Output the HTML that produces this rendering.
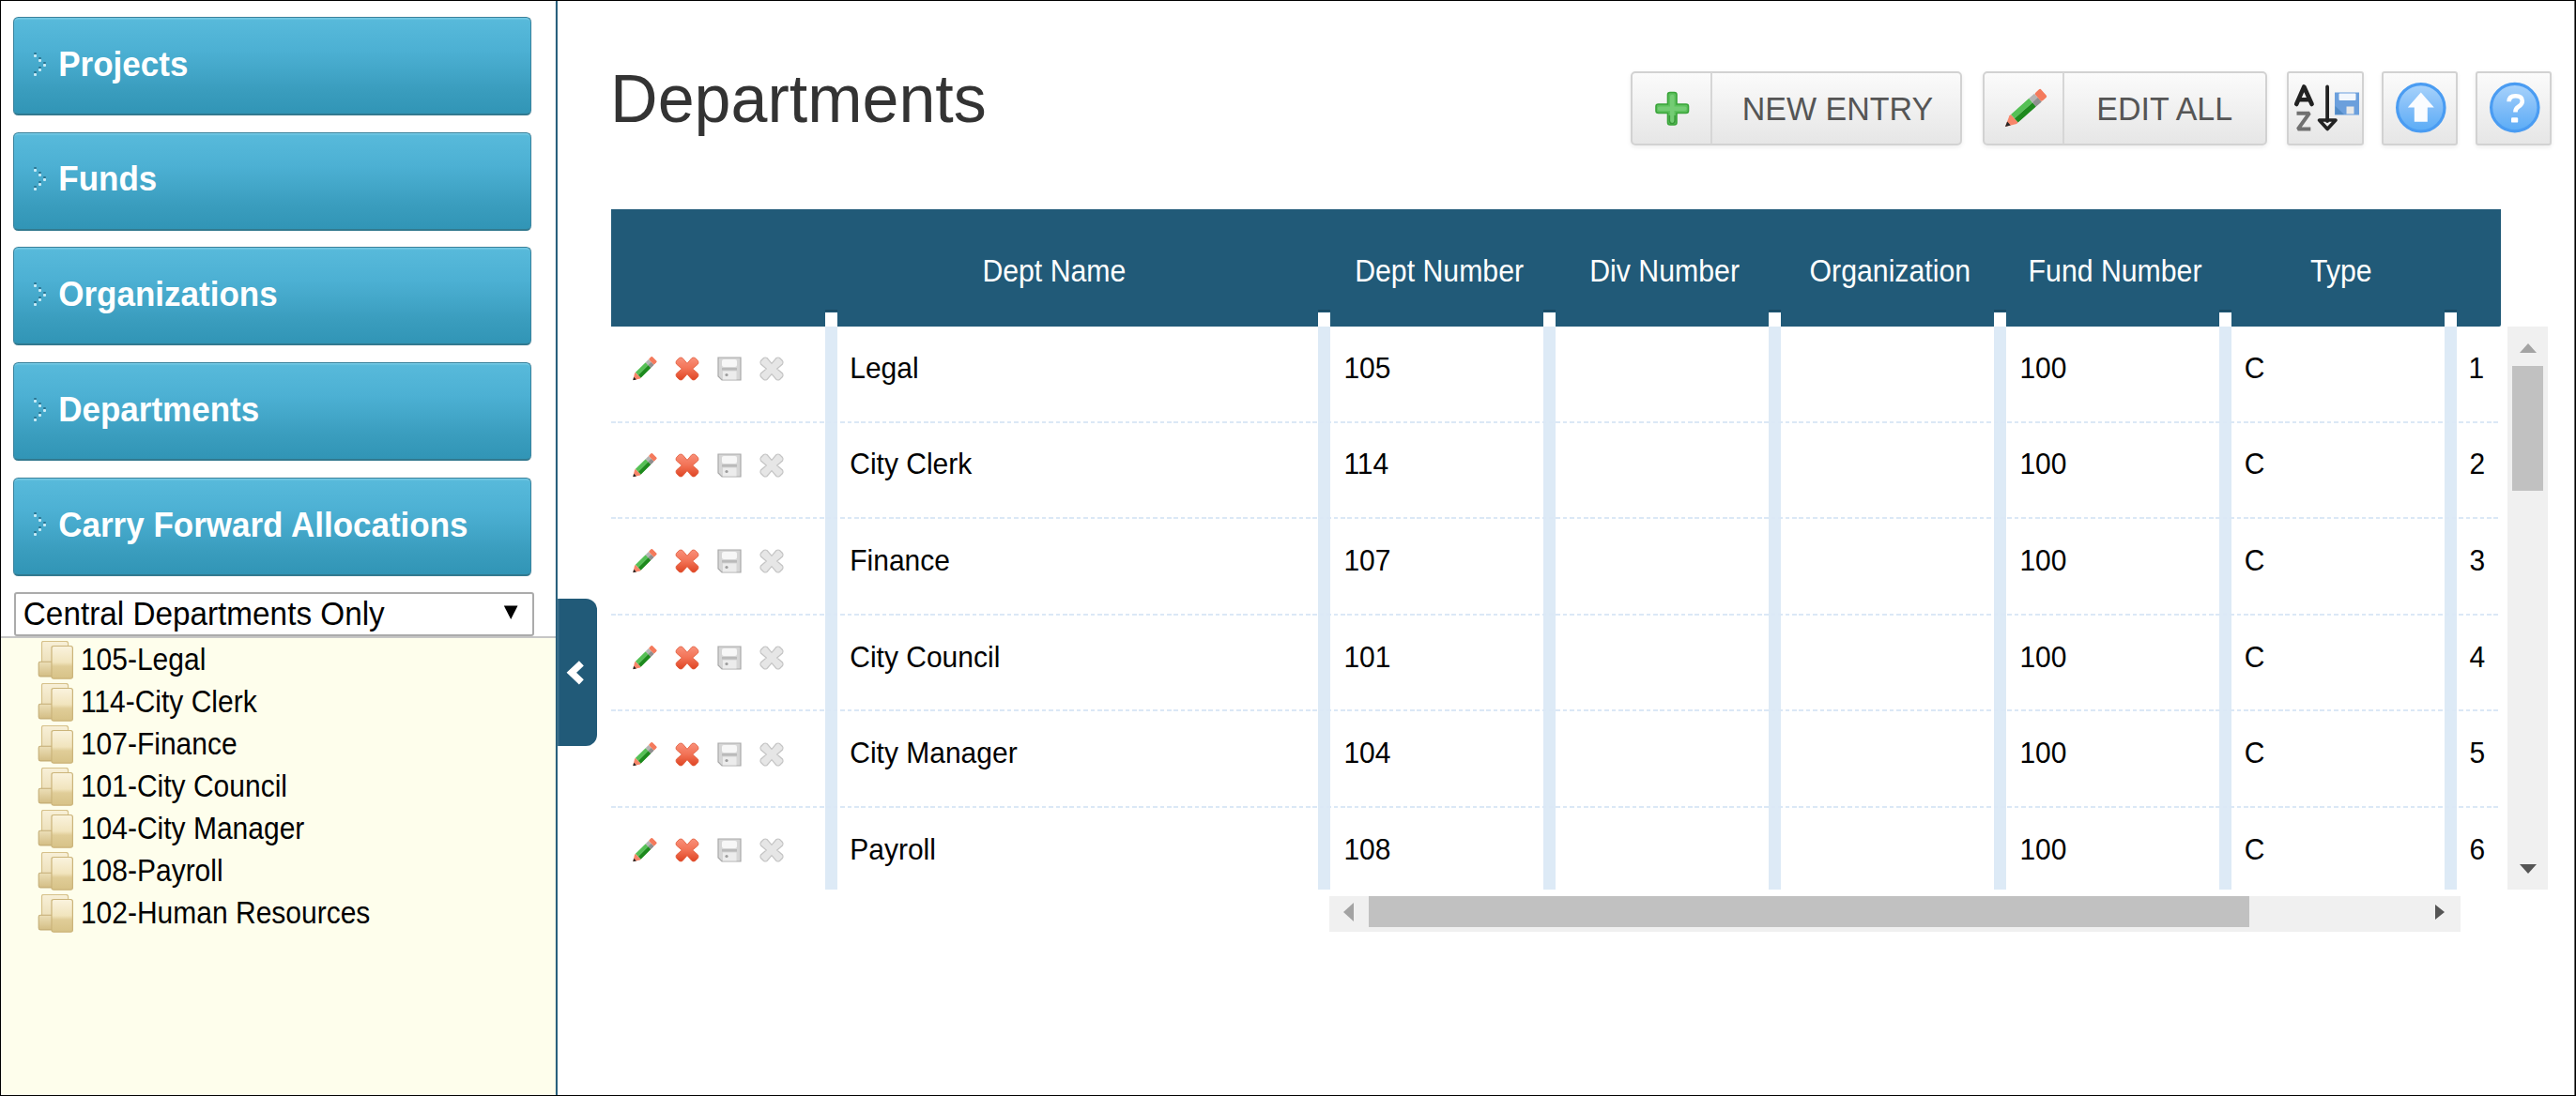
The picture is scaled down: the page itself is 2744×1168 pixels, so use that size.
<!DOCTYPE html>
<html><head><meta charset="utf-8">
<style>
*{box-sizing:border-box;margin:0;padding:0}
html,body{width:2744px;height:1168px;overflow:hidden;background:#fff}
body{position:relative;font-family:"Liberation Sans",sans-serif}
.a{position:absolute}
.t{font-family:"Liberation Sans",sans-serif;white-space:nowrap}
.frame{left:0;top:0;width:2744px;height:1168px;border:1px solid #000;border-right:1px solid #000;box-shadow:inset -1px 0 0 #666;z-index:50}
.nav{left:13.8px;width:552.6px;height:105px;border-radius:5.5px;
  background:linear-gradient(#58badb 0%,#4cb0d3 35%,#3a9dbe 75%,#3195b6 100%);
  border:1.5px solid #3a839d;border-bottom:2px solid #32798f;box-shadow:inset 0 2.5px 1px -1px #76cae5,0 0 1px rgba(0,0,0,.25)}
.sel{left:14.6px;top:630.6px;width:554px;height:47.6px;border:2px solid #ababab;background:#fff;border-radius:3px}
.tree{left:1px;top:678px;width:591px;height:489px;background:#fefeec;border-top:2px solid #c6c6c6}
.divider{left:591px;top:1px;width:2.4px;height:1166px;background:#215a78;transform:translateX(0.9px)}
.tab{left:594px;top:638px;width:42.3px;height:157px;background:#215a78;border-radius:0 12px 12px 0;box-shadow:inset 1.5px 0 0 #3b6f8b}
.btn{top:75.7px;height:79.6px;border:2px solid #d2d2d2;border-radius:5px;background:linear-gradient(#fbfbfb,#e6e6e6);box-shadow:0 2px 5px rgba(0,0,0,.07)}
.sep{top:77px;width:2px;height:77px;background:#d6d6d6}
.hdr{left:651px;top:223px;width:2013px;height:125px;background:#215a78;border-radius:0 0 2px 0}
.hw{top:333px;width:13px;height:15px;background:#fff}
.hd{top:330px;width:13px;height:2px;background:#1a4a63}
.hb{top:348px;width:13px;height:600px;background:#ddeaf6}
.dash{left:651px;width:2013px;height:2px;background:repeating-linear-gradient(90deg,#dbe8f6 0 4.5px,transparent 4.5px 7.4px)}
</style></head><body>
<div style="position:absolute;left:0;top:0;width:2744px;height:1168px;">

<svg width="0" height="0" style="position:absolute">
<defs>
 <linearGradient id="gRed" x1="0" y1="0" x2="0" y2="1"><stop offset="0" stop-color="#f9907a"/><stop offset="0.5" stop-color="#f27255"/><stop offset="1" stop-color="#df4524"/></linearGradient>
 <linearGradient id="gGreen" x1="0" y1="0" x2="0" y2="1"><stop offset="0" stop-color="#78d078"/><stop offset="1" stop-color="#3aa63a"/></linearGradient>
 <linearGradient id="gBlue" x1="0" y1="0" x2="0" y2="1"><stop offset="0" stop-color="#a9d3fb"/><stop offset="0.55" stop-color="#7dbbf8"/><stop offset="1" stop-color="#5aacf6"/></linearGradient>
 <linearGradient id="gFoldB" x1="0" y1="0" x2="0" y2="1"><stop offset="0" stop-color="#f8f0d8"/><stop offset="1" stop-color="#e6d6a8"/></linearGradient>
 <linearGradient id="gFoldT" x1="0" y1="0" x2="0" y2="1"><stop offset="0" stop-color="#ecdfb8"/><stop offset="1" stop-color="#d3bd84"/></linearGradient>
 <linearGradient id="gFoldF" x1="0" y1="0" x2="0" y2="1"><stop offset="0" stop-color="#faf3de"/><stop offset="0.5" stop-color="#f1e4bd"/><stop offset="0.62" stop-color="#e0cd98"/><stop offset="1" stop-color="#d7c287"/></linearGradient>
 <symbol id="pencil" viewBox="0 0 40 12">
   <path d="M0 6 L8 0.5 L9.5 0.5 L9.5 11.5 L8 11.5 Z" fill="#f7866a"/>
   <path d="M0 6 L3.8 3.4 L3.8 8.6 Z" fill="#262626"/>
   <rect x="9.5" y="0.5" width="18.5" height="5.5" fill="#55c055"/>
   <rect x="9.5" y="6" width="18.5" height="5.5" fill="#1d8a1d"/>
   <rect x="28" y="0.5" width="5.5" height="11" fill="#b4b4b4"/>
   <rect x="28" y="6" width="5.5" height="5.5" fill="#8f8f8f"/>
   <rect x="33.5" y="0.5" width="6" height="11" rx="1.5" fill="#f47a5c"/>
 </symbol>
 <symbol id="xshape" viewBox="0 0 26 26">
   <path d="M4.5 1.5 Q6 0.5 8 1.5 L13 7.3 L18 1.5 Q20 0.5 21.5 1.5 L24.5 4.5 Q25.5 6 24.5 8 L18.7 13 L24.5 18 Q25.5 20 24.5 21.5 L21.5 24.5 Q20 25.5 18 24.5 L13 18.7 L8 24.5 Q6 25.5 4.5 24.5 L1.5 21.5 Q0.5 20 1.5 18 L7.3 13 L1.5 8 Q0.5 6 1.5 4.5 Z"/>
 </symbol>
 <symbol id="floppy" viewBox="0 0 26 26">
   <path d="M1 1 H25 V25 H5 L1 21 Z" fill="#d6d6d6" stroke="#a9a9a9" stroke-width="1.2"/>
   <rect x="5" y="3" width="16" height="8" rx="2" fill="#f7f7f7"/>
   <rect x="5" y="12" width="16" height="2.6" fill="#bababa"/>
   <rect x="6" y="15.5" width="14.5" height="9" fill="#ececec"/>
   <circle cx="10" cy="19.5" r="1.6" fill="#9c9c9c"/>
 </symbol>
 <symbol id="folder" viewBox="0 0 40 42">
   <path d="M6.5 2.3 Q6.5 0.4 8.6 0.4 H32.2 Q34.6 0.4 34.6 2.6 V37.4 H6.5 Z" fill="url(#gFoldB)" stroke="#d6c18a" stroke-width="1.2"/>
   <path d="M3.2 24 Q3.2 22.3 5 22.3 H20.8 V37.9 H5 Q3.2 37.9 3.2 36 Z" fill="url(#gFoldT)" stroke="#c4ad76" stroke-width="1.1"/>
   <path d="M17 7.6 Q17 5.5 19.2 5.5 H37.2 Q39.4 5.5 39.4 7.8 V38 Q39.4 40.2 37.2 40.2 H19.2 Q17 40.2 17 38 Z" fill="url(#gFoldF)" stroke="#cbb47a" stroke-width="1.2"/>
 </symbol>
</defs></svg>

<div class="a nav" style="top:17.8px"></div>
<div class="a nav" style="top:140.5px"></div>
<div class="a nav" style="top:263.2px"></div>
<div class="a nav" style="top:385.9px"></div>
<div class="a nav" style="top:508.6px"></div>
<div class="a t" style="left:62.25px;top:50.75px;font-size:35px;line-height:35px;font-weight:700;color:#fff;transform:scaleY(1.03);transform-origin:0 29.75px;">Projects</div>
<div class="a" style="left:36.4px;top:55.5px;width:3px;height:2px;background:#2b7490;border-radius:1px"></div>
<div class="a" style="left:36.4px;top:57.5px;width:3px;height:3px;background:#c9ebf6;border-radius:1px"></div>
<div class="a" style="left:41.0px;top:60.5px;width:3px;height:2px;background:#2b7490;border-radius:1px"></div>
<div class="a" style="left:41.0px;top:62.5px;width:3px;height:3px;background:#c9ebf6;border-radius:1px"></div>
<div class="a" style="left:46.1px;top:65.5px;width:3px;height:2px;background:#2b7490;border-radius:1px"></div>
<div class="a" style="left:46.1px;top:67.5px;width:3px;height:3px;background:#c9ebf6;border-radius:1px"></div>
<div class="a" style="left:41.0px;top:70.5px;width:3px;height:2px;background:#2b7490;border-radius:1px"></div>
<div class="a" style="left:41.0px;top:72.5px;width:3px;height:3px;background:#c9ebf6;border-radius:1px"></div>
<div class="a" style="left:36.4px;top:75.5px;width:3px;height:2px;background:#2b7490;border-radius:1px"></div>
<div class="a" style="left:36.4px;top:77.5px;width:3px;height:3px;background:#c9ebf6;border-radius:1px"></div>
<div class="a t" style="left:62.25px;top:173.45px;font-size:35px;line-height:35px;font-weight:700;color:#fff;transform:scaleY(1.03);transform-origin:0 29.75px;">Funds</div>
<div class="a" style="left:36.4px;top:178.2px;width:3px;height:2px;background:#2b7490;border-radius:1px"></div>
<div class="a" style="left:36.4px;top:180.2px;width:3px;height:3px;background:#c9ebf6;border-radius:1px"></div>
<div class="a" style="left:41.0px;top:183.2px;width:3px;height:2px;background:#2b7490;border-radius:1px"></div>
<div class="a" style="left:41.0px;top:185.2px;width:3px;height:3px;background:#c9ebf6;border-radius:1px"></div>
<div class="a" style="left:46.1px;top:188.2px;width:3px;height:2px;background:#2b7490;border-radius:1px"></div>
<div class="a" style="left:46.1px;top:190.2px;width:3px;height:3px;background:#c9ebf6;border-radius:1px"></div>
<div class="a" style="left:41.0px;top:193.2px;width:3px;height:2px;background:#2b7490;border-radius:1px"></div>
<div class="a" style="left:41.0px;top:195.2px;width:3px;height:3px;background:#c9ebf6;border-radius:1px"></div>
<div class="a" style="left:36.4px;top:198.2px;width:3px;height:2px;background:#2b7490;border-radius:1px"></div>
<div class="a" style="left:36.4px;top:200.2px;width:3px;height:3px;background:#c9ebf6;border-radius:1px"></div>
<div class="a t" style="left:62.25px;top:296.15px;font-size:35px;line-height:35px;font-weight:700;color:#fff;transform:scaleY(1.03);transform-origin:0 29.75px;">Organizations</div>
<div class="a" style="left:36.4px;top:300.9px;width:3px;height:2px;background:#2b7490;border-radius:1px"></div>
<div class="a" style="left:36.4px;top:302.9px;width:3px;height:3px;background:#c9ebf6;border-radius:1px"></div>
<div class="a" style="left:41.0px;top:305.9px;width:3px;height:2px;background:#2b7490;border-radius:1px"></div>
<div class="a" style="left:41.0px;top:307.9px;width:3px;height:3px;background:#c9ebf6;border-radius:1px"></div>
<div class="a" style="left:46.1px;top:310.9px;width:3px;height:2px;background:#2b7490;border-radius:1px"></div>
<div class="a" style="left:46.1px;top:312.9px;width:3px;height:3px;background:#c9ebf6;border-radius:1px"></div>
<div class="a" style="left:41.0px;top:315.9px;width:3px;height:2px;background:#2b7490;border-radius:1px"></div>
<div class="a" style="left:41.0px;top:317.9px;width:3px;height:3px;background:#c9ebf6;border-radius:1px"></div>
<div class="a" style="left:36.4px;top:320.9px;width:3px;height:2px;background:#2b7490;border-radius:1px"></div>
<div class="a" style="left:36.4px;top:322.9px;width:3px;height:3px;background:#c9ebf6;border-radius:1px"></div>
<div class="a t" style="left:62.25px;top:418.85px;font-size:35px;line-height:35px;font-weight:700;color:#fff;transform:scaleY(1.03);transform-origin:0 29.75px;">Departments</div>
<div class="a" style="left:36.4px;top:423.6px;width:3px;height:2px;background:#2b7490;border-radius:1px"></div>
<div class="a" style="left:36.4px;top:425.6px;width:3px;height:3px;background:#c9ebf6;border-radius:1px"></div>
<div class="a" style="left:41.0px;top:428.6px;width:3px;height:2px;background:#2b7490;border-radius:1px"></div>
<div class="a" style="left:41.0px;top:430.6px;width:3px;height:3px;background:#c9ebf6;border-radius:1px"></div>
<div class="a" style="left:46.1px;top:433.6px;width:3px;height:2px;background:#2b7490;border-radius:1px"></div>
<div class="a" style="left:46.1px;top:435.6px;width:3px;height:3px;background:#c9ebf6;border-radius:1px"></div>
<div class="a" style="left:41.0px;top:438.6px;width:3px;height:2px;background:#2b7490;border-radius:1px"></div>
<div class="a" style="left:41.0px;top:440.6px;width:3px;height:3px;background:#c9ebf6;border-radius:1px"></div>
<div class="a" style="left:36.4px;top:443.6px;width:3px;height:2px;background:#2b7490;border-radius:1px"></div>
<div class="a" style="left:36.4px;top:445.6px;width:3px;height:3px;background:#c9ebf6;border-radius:1px"></div>
<div class="a t" style="left:62.25px;top:541.55px;font-size:35px;line-height:35px;font-weight:700;color:#fff;transform:scaleY(1.03);transform-origin:0 29.75px;">Carry Forward Allocations</div>
<div class="a" style="left:36.4px;top:546.3px;width:3px;height:2px;background:#2b7490;border-radius:1px"></div>
<div class="a" style="left:36.4px;top:548.3px;width:3px;height:3px;background:#c9ebf6;border-radius:1px"></div>
<div class="a" style="left:41.0px;top:551.3px;width:3px;height:2px;background:#2b7490;border-radius:1px"></div>
<div class="a" style="left:41.0px;top:553.3px;width:3px;height:3px;background:#c9ebf6;border-radius:1px"></div>
<div class="a" style="left:46.1px;top:556.3px;width:3px;height:2px;background:#2b7490;border-radius:1px"></div>
<div class="a" style="left:46.1px;top:558.3px;width:3px;height:3px;background:#c9ebf6;border-radius:1px"></div>
<div class="a" style="left:41.0px;top:561.3px;width:3px;height:2px;background:#2b7490;border-radius:1px"></div>
<div class="a" style="left:41.0px;top:563.3px;width:3px;height:3px;background:#c9ebf6;border-radius:1px"></div>
<div class="a" style="left:36.4px;top:566.3px;width:3px;height:2px;background:#2b7490;border-radius:1px"></div>
<div class="a" style="left:36.4px;top:568.3px;width:3px;height:3px;background:#c9ebf6;border-radius:1px"></div>
<div class="a sel"></div>
<div class="a t" style="left:24.84px;top:638.00px;font-size:33.3px;line-height:33.3px;font-weight:400;color:#000;transform:scaleY(1.03);transform-origin:0 28.30px;">Central Departments Only</div>
<svg class="a" style="left:530px;top:640px" width="28" height="26" viewBox="0 0 28 26"><path d="M6.8 5.5H21.5L14.2 20Z" fill="#000"/></svg>
<div class="a tree"></div>
<div class="a t" style="left:85.90px;top:688.80px;font-size:30px;line-height:30px;font-weight:400;color:#000;transform:scaleY(1.08);transform-origin:0 25.50px;">105-Legal</div>
<svg class="a" style="left:38px;top:683.0px" width="40" height="42"><use href="#folder"/></svg>
<div class="a t" style="left:85.90px;top:733.75px;font-size:30px;line-height:30px;font-weight:400;color:#000;transform:scaleY(1.08);transform-origin:0 25.50px;">114-City Clerk</div>
<svg class="a" style="left:38px;top:728.0px" width="40" height="42"><use href="#folder"/></svg>
<div class="a t" style="left:85.90px;top:778.70px;font-size:30px;line-height:30px;font-weight:400;color:#000;transform:scaleY(1.08);transform-origin:0 25.50px;">107-Finance</div>
<svg class="a" style="left:38px;top:772.9px" width="40" height="42"><use href="#folder"/></svg>
<div class="a t" style="left:85.90px;top:823.65px;font-size:30px;line-height:30px;font-weight:400;color:#000;transform:scaleY(1.08);transform-origin:0 25.50px;">101-City Council</div>
<svg class="a" style="left:38px;top:817.9px" width="40" height="42"><use href="#folder"/></svg>
<div class="a t" style="left:85.90px;top:868.60px;font-size:30px;line-height:30px;font-weight:400;color:#000;transform:scaleY(1.08);transform-origin:0 25.50px;">104-City Manager</div>
<svg class="a" style="left:38px;top:862.8px" width="40" height="42"><use href="#folder"/></svg>
<div class="a t" style="left:85.90px;top:913.55px;font-size:30px;line-height:30px;font-weight:400;color:#000;transform:scaleY(1.08);transform-origin:0 25.50px;">108-Payroll</div>
<svg class="a" style="left:38px;top:907.8px" width="40" height="42"><use href="#folder"/></svg>
<div class="a t" style="left:85.90px;top:958.50px;font-size:30px;line-height:30px;font-weight:400;color:#000;transform:scaleY(1.08);transform-origin:0 25.50px;">102-Human Resources</div>
<svg class="a" style="left:38px;top:952.7px" width="40" height="42"><use href="#folder"/></svg>
<div class="a divider"></div>
<div class="a tab"></div>
<svg class="a" style="left:596px;top:696px" width="36" height="40" viewBox="0 0 36 40"><path d="M23.35 10.8L12.8 20.8L23.35 30.8" fill="none" stroke="#fff" stroke-width="7.2" stroke-linejoin="miter"/></svg>
<div class="a t" style="left:650.10px;top:70.90px;font-size:70px;line-height:70px;font-weight:400;color:#333;transform:scaleY(1.03);transform-origin:0 59.50px;">Departments</div>
<div class="a btn" style="left:1737px;width:353px"></div>
<div class="a sep" style="left:1821.5px"></div>
<div class="a t" style="left:1855.78px;top:98.90px;font-size:34px;line-height:34px;font-weight:400;color:#555;transform:scaleY(1.05);transform-origin:0 28.90px;">NEW ENTRY</div>
<div class="a btn" style="left:2112px;width:303px"></div>
<div class="a sep" style="left:2196.5px"></div>
<div class="a t" style="left:2233.28px;top:98.90px;font-size:34px;line-height:34px;font-weight:400;color:#555;transform:scaleY(1.05);transform-origin:0 28.90px;">EDIT ALL</div>
<div class="a btn" style="left:2435.7px;width:82.5px;border-radius:3px"></div>
<div class="a btn" style="left:2536.6px;width:81.6px;border-radius:3px"></div>
<div class="a btn" style="left:2636.6px;width:81.6px;border-radius:3px"></div>
<div class="a hdr"></div>
<div class="a t" style="left:1046.38px;top:275.29px;font-size:30.25px;line-height:30.25px;font-weight:400;color:#fff;transform:scaleY(1.08);transform-origin:0 25.71px;">Dept Name</div>
<div class="a t" style="left:1443.18px;top:275.29px;font-size:30.25px;line-height:30.25px;font-weight:400;color:#fff;transform:scaleY(1.08);transform-origin:0 25.71px;">Dept Number</div>
<div class="a t" style="left:1693.28px;top:275.29px;font-size:30.25px;line-height:30.25px;font-weight:400;color:#fff;transform:scaleY(1.08);transform-origin:0 25.71px;">Div Number</div>
<div class="a t" style="left:1927.58px;top:275.29px;font-size:30.25px;line-height:30.25px;font-weight:400;color:#fff;transform:scaleY(1.08);transform-origin:0 25.71px;">Organization</div>
<div class="a t" style="left:2160.58px;top:275.29px;font-size:30.25px;line-height:30.25px;font-weight:400;color:#fff;transform:scaleY(1.08);transform-origin:0 25.71px;">Fund Number</div>
<div class="a t" style="left:2461.08px;top:275.29px;font-size:30.25px;line-height:30.25px;font-weight:400;color:#fff;transform:scaleY(1.08);transform-origin:0 25.71px;">Type</div>
<div class="a hw" style="left:879px"></div>
<div class="a hd" style="left:879px"></div>
<div class="a hb" style="left:879px"></div>
<div class="a hw" style="left:1404px"></div>
<div class="a hd" style="left:1404px"></div>
<div class="a hb" style="left:1404px"></div>
<div class="a hw" style="left:1644px"></div>
<div class="a hd" style="left:1644px"></div>
<div class="a hb" style="left:1644px"></div>
<div class="a hw" style="left:1884px"></div>
<div class="a hd" style="left:1884px"></div>
<div class="a hb" style="left:1884px"></div>
<div class="a hw" style="left:2124px"></div>
<div class="a hd" style="left:2124px"></div>
<div class="a hb" style="left:2124px"></div>
<div class="a hw" style="left:2364px"></div>
<div class="a hd" style="left:2364px"></div>
<div class="a hb" style="left:2364px"></div>
<div class="a hw" style="left:2604px"></div>
<div class="a hd" style="left:2604px"></div>
<div class="a hb" style="left:2604px"></div>
<div class="a dash" style="top:448.5px"></div>
<div class="a dash" style="top:551.0px"></div>
<div class="a dash" style="top:653.6px"></div>
<div class="a dash" style="top:756.1px"></div>
<div class="a dash" style="top:858.7px"></div>
<div class="a t" style="left:905.25px;top:377.90px;font-size:30px;line-height:30px;font-weight:400;color:#000;transform:scaleY(1.04);transform-origin:0 25.50px;">Legal</div>
<div class="a t" style="left:1431.40px;top:377.90px;font-size:30px;line-height:30px;font-weight:400;color:#000;transform:scaleY(1.04);transform-origin:0 25.50px;">105</div>
<div class="a t" style="left:2151.40px;top:377.90px;font-size:30px;line-height:30px;font-weight:400;color:#000;transform:scaleY(1.04);transform-origin:0 25.50px;">100</div>
<div class="a t" style="left:2390.70px;top:377.90px;font-size:30px;line-height:30px;font-weight:400;color:#000;transform:scaleY(1.04);transform-origin:0 25.50px;">C</div>
<div class="a t" style="left:2629.60px;top:377.90px;font-size:30px;line-height:30px;font-weight:400;color:#000;transform:scaleY(1.04);transform-origin:0 25.50px;">1</div>
<svg class="a" style="left:672px;top:379.3px" width="30" height="28" viewBox="0 0 30 28"><g transform="translate(2.3,26.3) rotate(-45) scale(0.82,0.75)"><use href="#pencil" width="40" height="12" y="-6"/></g></svg>
<svg class="a" style="left:719px;top:380.3px" width="26" height="26"><use href="#xshape" width="26" height="26" fill="url(#gRed)" stroke="#e05a3a" stroke-width="0.8"/></svg>
<svg class="a" style="left:764px;top:380.3px" width="26" height="26"><use href="#floppy" width="26" height="26"/></svg>
<svg class="a" style="left:809px;top:380.3px" width="26" height="26"><use href="#xshape" width="26" height="26" fill="#e6e6e6" stroke="#c4c4c4" stroke-width="1.2"/></svg>
<div class="a t" style="left:905.25px;top:480.46px;font-size:30px;line-height:30px;font-weight:400;color:#000;transform:scaleY(1.04);transform-origin:0 25.50px;">City Clerk</div>
<div class="a t" style="left:1431.40px;top:480.46px;font-size:30px;line-height:30px;font-weight:400;color:#000;transform:scaleY(1.04);transform-origin:0 25.50px;">114</div>
<div class="a t" style="left:2151.40px;top:480.46px;font-size:30px;line-height:30px;font-weight:400;color:#000;transform:scaleY(1.04);transform-origin:0 25.50px;">100</div>
<div class="a t" style="left:2390.70px;top:480.46px;font-size:30px;line-height:30px;font-weight:400;color:#000;transform:scaleY(1.04);transform-origin:0 25.50px;">C</div>
<div class="a t" style="left:2630.40px;top:480.46px;font-size:30px;line-height:30px;font-weight:400;color:#000;transform:scaleY(1.04);transform-origin:0 25.50px;">2</div>
<svg class="a" style="left:672px;top:481.9px" width="30" height="28" viewBox="0 0 30 28"><g transform="translate(2.3,26.3) rotate(-45) scale(0.82,0.75)"><use href="#pencil" width="40" height="12" y="-6"/></g></svg>
<svg class="a" style="left:719px;top:482.9px" width="26" height="26"><use href="#xshape" width="26" height="26" fill="url(#gRed)" stroke="#e05a3a" stroke-width="0.8"/></svg>
<svg class="a" style="left:764px;top:482.9px" width="26" height="26"><use href="#floppy" width="26" height="26"/></svg>
<svg class="a" style="left:809px;top:482.9px" width="26" height="26"><use href="#xshape" width="26" height="26" fill="#e6e6e6" stroke="#c4c4c4" stroke-width="1.2"/></svg>
<div class="a t" style="left:905.25px;top:583.02px;font-size:30px;line-height:30px;font-weight:400;color:#000;transform:scaleY(1.04);transform-origin:0 25.50px;">Finance</div>
<div class="a t" style="left:1431.40px;top:583.02px;font-size:30px;line-height:30px;font-weight:400;color:#000;transform:scaleY(1.04);transform-origin:0 25.50px;">107</div>
<div class="a t" style="left:2151.40px;top:583.02px;font-size:30px;line-height:30px;font-weight:400;color:#000;transform:scaleY(1.04);transform-origin:0 25.50px;">100</div>
<div class="a t" style="left:2390.70px;top:583.02px;font-size:30px;line-height:30px;font-weight:400;color:#000;transform:scaleY(1.04);transform-origin:0 25.50px;">C</div>
<div class="a t" style="left:2630.40px;top:583.02px;font-size:30px;line-height:30px;font-weight:400;color:#000;transform:scaleY(1.04);transform-origin:0 25.50px;">3</div>
<svg class="a" style="left:672px;top:584.4px" width="30" height="28" viewBox="0 0 30 28"><g transform="translate(2.3,26.3) rotate(-45) scale(0.82,0.75)"><use href="#pencil" width="40" height="12" y="-6"/></g></svg>
<svg class="a" style="left:719px;top:585.4px" width="26" height="26"><use href="#xshape" width="26" height="26" fill="url(#gRed)" stroke="#e05a3a" stroke-width="0.8"/></svg>
<svg class="a" style="left:764px;top:585.4px" width="26" height="26"><use href="#floppy" width="26" height="26"/></svg>
<svg class="a" style="left:809px;top:585.4px" width="26" height="26"><use href="#xshape" width="26" height="26" fill="#e6e6e6" stroke="#c4c4c4" stroke-width="1.2"/></svg>
<div class="a t" style="left:905.25px;top:685.58px;font-size:30px;line-height:30px;font-weight:400;color:#000;transform:scaleY(1.04);transform-origin:0 25.50px;">City Council</div>
<div class="a t" style="left:1431.40px;top:685.58px;font-size:30px;line-height:30px;font-weight:400;color:#000;transform:scaleY(1.04);transform-origin:0 25.50px;">101</div>
<div class="a t" style="left:2151.40px;top:685.58px;font-size:30px;line-height:30px;font-weight:400;color:#000;transform:scaleY(1.04);transform-origin:0 25.50px;">100</div>
<div class="a t" style="left:2390.70px;top:685.58px;font-size:30px;line-height:30px;font-weight:400;color:#000;transform:scaleY(1.04);transform-origin:0 25.50px;">C</div>
<div class="a t" style="left:2630.40px;top:685.58px;font-size:30px;line-height:30px;font-weight:400;color:#000;transform:scaleY(1.04);transform-origin:0 25.50px;">4</div>
<svg class="a" style="left:672px;top:687.0px" width="30" height="28" viewBox="0 0 30 28"><g transform="translate(2.3,26.3) rotate(-45) scale(0.82,0.75)"><use href="#pencil" width="40" height="12" y="-6"/></g></svg>
<svg class="a" style="left:719px;top:688.0px" width="26" height="26"><use href="#xshape" width="26" height="26" fill="url(#gRed)" stroke="#e05a3a" stroke-width="0.8"/></svg>
<svg class="a" style="left:764px;top:688.0px" width="26" height="26"><use href="#floppy" width="26" height="26"/></svg>
<svg class="a" style="left:809px;top:688.0px" width="26" height="26"><use href="#xshape" width="26" height="26" fill="#e6e6e6" stroke="#c4c4c4" stroke-width="1.2"/></svg>
<div class="a t" style="left:905.25px;top:788.14px;font-size:30px;line-height:30px;font-weight:400;color:#000;transform:scaleY(1.04);transform-origin:0 25.50px;">City Manager</div>
<div class="a t" style="left:1431.40px;top:788.14px;font-size:30px;line-height:30px;font-weight:400;color:#000;transform:scaleY(1.04);transform-origin:0 25.50px;">104</div>
<div class="a t" style="left:2151.40px;top:788.14px;font-size:30px;line-height:30px;font-weight:400;color:#000;transform:scaleY(1.04);transform-origin:0 25.50px;">100</div>
<div class="a t" style="left:2390.70px;top:788.14px;font-size:30px;line-height:30px;font-weight:400;color:#000;transform:scaleY(1.04);transform-origin:0 25.50px;">C</div>
<div class="a t" style="left:2630.40px;top:788.14px;font-size:30px;line-height:30px;font-weight:400;color:#000;transform:scaleY(1.04);transform-origin:0 25.50px;">5</div>
<svg class="a" style="left:672px;top:789.5px" width="30" height="28" viewBox="0 0 30 28"><g transform="translate(2.3,26.3) rotate(-45) scale(0.82,0.75)"><use href="#pencil" width="40" height="12" y="-6"/></g></svg>
<svg class="a" style="left:719px;top:790.5px" width="26" height="26"><use href="#xshape" width="26" height="26" fill="url(#gRed)" stroke="#e05a3a" stroke-width="0.8"/></svg>
<svg class="a" style="left:764px;top:790.5px" width="26" height="26"><use href="#floppy" width="26" height="26"/></svg>
<svg class="a" style="left:809px;top:790.5px" width="26" height="26"><use href="#xshape" width="26" height="26" fill="#e6e6e6" stroke="#c4c4c4" stroke-width="1.2"/></svg>
<div class="a t" style="left:905.25px;top:890.70px;font-size:30px;line-height:30px;font-weight:400;color:#000;transform:scaleY(1.04);transform-origin:0 25.50px;">Payroll</div>
<div class="a t" style="left:1431.40px;top:890.70px;font-size:30px;line-height:30px;font-weight:400;color:#000;transform:scaleY(1.04);transform-origin:0 25.50px;">108</div>
<div class="a t" style="left:2151.40px;top:890.70px;font-size:30px;line-height:30px;font-weight:400;color:#000;transform:scaleY(1.04);transform-origin:0 25.50px;">100</div>
<div class="a t" style="left:2390.70px;top:890.70px;font-size:30px;line-height:30px;font-weight:400;color:#000;transform:scaleY(1.04);transform-origin:0 25.50px;">C</div>
<div class="a t" style="left:2630.40px;top:890.70px;font-size:30px;line-height:30px;font-weight:400;color:#000;transform:scaleY(1.04);transform-origin:0 25.50px;">6</div>
<svg class="a" style="left:672px;top:892.1px" width="30" height="28" viewBox="0 0 30 28"><g transform="translate(2.3,26.3) rotate(-45) scale(0.82,0.75)"><use href="#pencil" width="40" height="12" y="-6"/></g></svg>
<svg class="a" style="left:719px;top:893.1px" width="26" height="26"><use href="#xshape" width="26" height="26" fill="url(#gRed)" stroke="#e05a3a" stroke-width="0.8"/></svg>
<svg class="a" style="left:764px;top:893.1px" width="26" height="26"><use href="#floppy" width="26" height="26"/></svg>
<svg class="a" style="left:809px;top:893.1px" width="26" height="26"><use href="#xshape" width="26" height="26" fill="#e6e6e6" stroke="#c4c4c4" stroke-width="1.2"/></svg>
<div class="a" style="left:2671px;top:348px;width:43px;height:600px;background:#f0f0f0"></div>
<svg class="a" style="left:2683px;top:365px" width="20" height="12"><path d="M1 11H19L10 1Z" fill="#a3a3a3"/></svg>
<div class="a" style="left:2676.4px;top:390px;width:33px;height:133px;background:#c1c1c1"></div>
<svg class="a" style="left:2683px;top:920px" width="20" height="12"><path d="M1 1H19L10 11Z" fill="#555"/></svg>
<div class="a" style="left:1416px;top:955px;width:1205px;height:38px;background:#f0f0f0"></div>
<div class="a" style="left:1458px;top:955px;width:938px;height:33px;background:#c1c1c1"></div>
<svg class="a" style="left:1430px;top:961px" width="13" height="22"><path d="M12 1V21L1 11Z" fill="#a3a3a3"/></svg>
<svg class="a" style="left:2593px;top:963px" width="13" height="18"><path d="M1 1V17L11 9Z" fill="#555"/></svg>
<svg class="a" style="left:1762px;top:97px" width="39" height="38" viewBox="0 0 39 38">
<path d="M14.5 4 Q14.5 1.5 17 1.5 H21.5 Q24 1.5 24 4 V14 H34 Q36.5 14 36.5 16.5 V21 Q36.5 23.5 34 23.5 H24 V33.5 Q24 36 21.5 36 H17 Q14.5 36 14.5 33.5 V23.5 H4.5 Q2 23.5 2 21 V16.5 Q2 14 4.5 14 H14.5 Z" fill="#5cc05c" stroke="#3aa43a" stroke-width="1.6"/>
<path d="M19.25 6 V32 M6 18.75 H32.5" stroke="#74cc74" stroke-width="4.5" stroke-linecap="round"/>
<path d="M16.4 26 V31.5 Q16.4 34.6 19.25 34.6 Q22.1 34.6 22.1 31.5 V26" fill="none" stroke="#2f8f2f" stroke-width="1.4" opacity=".8"/>
</svg>
<svg class="a" style="left:2131px;top:94px" width="52" height="46" viewBox="0 0 52 46"><g transform="translate(5,41) rotate(-41.6) scale(1.39,1.05)"><use href="#pencil" width="40" height="12" y="-6"/></g></svg>
<svg class="a" style="left:2440px;top:85px" width="76" height="60" viewBox="0 0 76 60">
<path d="M6.2 26 L14.3 7.5 L22.6 26 M9.5 21.3 H19" fill="none" stroke="#222" stroke-width="4.6" stroke-linejoin="round" stroke-linecap="round"/>
<path d="M6.5 35.7 H20 L7.8 52.6 H21.3" fill="none" stroke="#707070" stroke-width="4" stroke-linejoin="bevel"/>
<path d="M39.1 7.5 V44" stroke="#222" stroke-width="3.8" stroke-linecap="round"/>
<path d="M30.5 43 H48 L39.2 52.5 Z" fill="none" stroke="#222" stroke-width="3.6" stroke-linejoin="round"/>
<path d="M47 13.5 H73 V37.5 H47 Z" fill="#6b9fdc"/>
<rect x="51.5" y="14.5" width="18" height="7.5" rx="1" fill="#f2f7fd"/>
<rect x="59.5" y="28.5" width="8" height="8" fill="#e8e8e8"/>
<path d="M47.5 28 V37 H57 Q53 33 47.5 28Z" fill="#3f7db5" opacity=".6"/>
</svg>
<svg class="a" style="left:2550px;top:86px" width="58" height="58" viewBox="0 0 58 58">
<circle cx="28.8" cy="28.8" r="25.2" fill="url(#gBlue)" stroke="#4a9cf2" stroke-width="3.2"/>
<path d="M28.8 12.5 L42.8 28.6 H35.8 V43.8 H21.8 V28.6 H14.8 Z" fill="#fafcff"/>
</svg>
<svg class="a" style="left:2650px;top:86px" width="58" height="58" viewBox="0 0 58 58">
<circle cx="28.8" cy="28.6" r="25.2" fill="url(#gBlue)" stroke="#4a9cf2" stroke-width="3.2"/>
<path d="M22.6 22.3 Q22.6 16.2 29.6 16.2 Q36.8 16.2 36.8 21.8 Q36.8 25.2 32.6 27.8 Q29.4 29.8 29.4 33.5" fill="none" stroke="#fff" stroke-width="4.6"/>
<rect x="25" y="39.2" width="7.2" height="5.4" rx="1.2" fill="#fff"/>
</svg>
</div>
<div class="a frame"></div>
</body></html>
